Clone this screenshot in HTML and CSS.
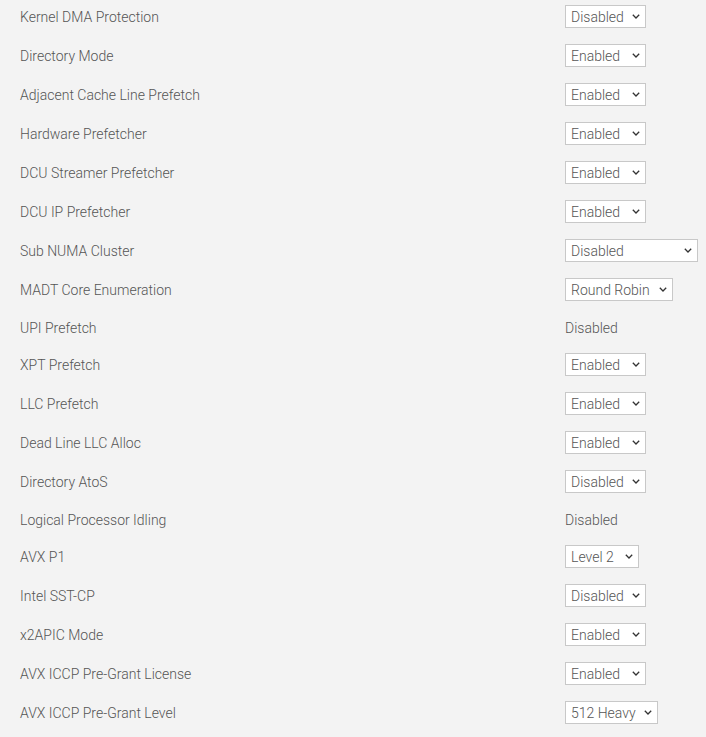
FILE: index.html
```html
<!DOCTYPE html>
<html>
<head>
<meta charset="utf-8">
<link rel="stylesheet" href="styles.css">
</head>
<body>
<div class="list">
  <div class="row"><span class="label">Kernel DMA Protection</span><span class="pick"><select class="sel w81"><option>Disabled</option><option>Enabled</option></select><svg class="chev" width="8" height="5" viewBox="0 0 8 5"><path d="M0.8 0.8 L4 4 L7.2 0.8"/></svg></span></div>
  <div class="row"><span class="label">Directory Mode</span><span class="pick"><select class="sel w81"><option>Enabled</option><option>Disabled</option></select><svg class="chev" width="8" height="5" viewBox="0 0 8 5"><path d="M0.8 0.8 L4 4 L7.2 0.8"/></svg></span></div>
  <div class="row"><span class="label">Adjacent Cache Line Prefetch</span><span class="pick"><select class="sel w81"><option>Enabled</option><option>Disabled</option></select><svg class="chev" width="8" height="5" viewBox="0 0 8 5"><path d="M0.8 0.8 L4 4 L7.2 0.8"/></svg></span></div>
  <div class="row"><span class="label">Hardware Prefetcher</span><span class="pick"><select class="sel w81"><option>Enabled</option><option>Disabled</option></select><svg class="chev" width="8" height="5" viewBox="0 0 8 5"><path d="M0.8 0.8 L4 4 L7.2 0.8"/></svg></span></div>
  <div class="row"><span class="label">DCU Streamer Prefetcher</span><span class="pick"><select class="sel w81"><option>Enabled</option><option>Disabled</option></select><svg class="chev" width="8" height="5" viewBox="0 0 8 5"><path d="M0.8 0.8 L4 4 L7.2 0.8"/></svg></span></div>
  <div class="row"><span class="label">DCU IP Prefetcher</span><span class="pick"><select class="sel w81"><option>Enabled</option><option>Disabled</option></select><svg class="chev" width="8" height="5" viewBox="0 0 8 5"><path d="M0.8 0.8 L4 4 L7.2 0.8"/></svg></span></div>
  <div class="row"><span class="label">Sub NUMA Cluster</span><span class="pick"><select class="sel w133"><option>Disabled</option><option>SNC2 (2-clusters)</option></select><svg class="chev" width="8" height="5" viewBox="0 0 8 5"><path d="M0.8 0.8 L4 4 L7.2 0.8"/></svg></span></div>
  <div class="row"><span class="label">MADT Core Enumeration</span><span class="pick"><select class="sel w108"><option>Round Robin</option><option>Linear</option></select><svg class="chev" width="8" height="5" viewBox="0 0 8 5"><path d="M0.8 0.8 L4 4 L7.2 0.8"/></svg></span></div>
  <div class="row text"><span class="label">UPI Prefetch</span><span class="value">Disabled</span></div>
  <div class="row"><span class="label">XPT Prefetch</span><span class="pick"><select class="sel w81"><option>Enabled</option><option>Disabled</option></select><svg class="chev" width="8" height="5" viewBox="0 0 8 5"><path d="M0.8 0.8 L4 4 L7.2 0.8"/></svg></span></div>
  <div class="row"><span class="label">LLC Prefetch</span><span class="pick"><select class="sel w81"><option>Enabled</option><option>Disabled</option></select><svg class="chev" width="8" height="5" viewBox="0 0 8 5"><path d="M0.8 0.8 L4 4 L7.2 0.8"/></svg></span></div>
  <div class="row"><span class="label">Dead Line LLC Alloc</span><span class="pick"><select class="sel w81"><option>Enabled</option><option>Disabled</option></select><svg class="chev" width="8" height="5" viewBox="0 0 8 5"><path d="M0.8 0.8 L4 4 L7.2 0.8"/></svg></span></div>
  <div class="row"><span class="label">Directory AtoS</span><span class="pick"><select class="sel w81"><option>Disabled</option><option>Enabled</option></select><svg class="chev" width="8" height="5" viewBox="0 0 8 5"><path d="M0.8 0.8 L4 4 L7.2 0.8"/></svg></span></div>
  <div class="row text"><span class="label">Logical Processor Idling</span><span class="value">Disabled</span></div>
  <div class="row"><span class="label">AVX P1</span><span class="pick"><select class="sel w74"><option>Level 2</option><option>Level 1</option></select><svg class="chev" width="8" height="5" viewBox="0 0 8 5"><path d="M0.8 0.8 L4 4 L7.2 0.8"/></svg></span></div>
  <div class="row"><span class="label">Intel SST-CP</span><span class="pick"><select class="sel w81"><option>Disabled</option><option>Enabled</option></select><svg class="chev" width="8" height="5" viewBox="0 0 8 5"><path d="M0.8 0.8 L4 4 L7.2 0.8"/></svg></span></div>
  <div class="row"><span class="label">x2APIC Mode</span><span class="pick"><select class="sel w81"><option>Enabled</option><option>Disabled</option></select><svg class="chev" width="8" height="5" viewBox="0 0 8 5"><path d="M0.8 0.8 L4 4 L7.2 0.8"/></svg></span></div>
  <div class="row"><span class="label">AVX ICCP Pre-Grant License</span><span class="pick"><select class="sel w81"><option>Enabled</option><option>Disabled</option></select><svg class="chev" width="8" height="5" viewBox="0 0 8 5"><path d="M0.8 0.8 L4 4 L7.2 0.8"/></svg></span></div>
  <div class="row"><span class="label">AVX ICCP Pre-Grant Level</span><span class="pick"><select class="sel w93"><option>512 Heavy</option><option>128 Heavy</option></select><svg class="chev" width="8" height="5" viewBox="0 0 8 5"><path d="M0.8 0.8 L4 4 L7.2 0.8"/></svg></span></div>
</div>
</body>
</html>
```
FILE: styles.css
```css
html, body {
  margin: 0;
  padding: 0;
  background: #f3f3f3;
}
body {
  font-family: Roboto, "Noto Sans", sans-serif;
  font-size: 14px;
  font-weight: 300;
  color: #555;
  overflow: hidden;
}
.list {
  margin-top: -3px;
  padding-left: 20px;
}
.row {
  display: grid;
  grid-template-columns: 545px auto;
  align-items: center;
  padding: 8px 0;
  height: 23px;
}
.row.text {
  height: 20px;
  padding: 9px 0 7px;
}
.label, .value {
  line-height: 20px;
}
.pick {
  position: relative;
  justify-self: start;
  display: block;
  height: 23px;
}
.sel {
  display: block;
  -webkit-appearance: none;
  appearance: none;
  font-family: Roboto, "Noto Sans", sans-serif;
  font-size: 14px;
  font-weight: 300;
  color: #555;
  height: 23px;
  border: 1px solid #c8c8c8;
  border-radius: 0;
  background-color: #fff;
  padding: 0 16px 0 5px;
  margin: 0;
  box-sizing: border-box;
  outline: none;
}
.chev {
  position: absolute;
  right: 6px;
  top: 9px;
  pointer-events: none;
  fill: none;
  stroke: #333;
  stroke-width: 1.3;
}
.w74 { width: 74px; }
.w81 { width: 81px; }
.w93 { width: 93px; }
.w108 { width: 108px; }
.w133 { width: 133px; }
```
